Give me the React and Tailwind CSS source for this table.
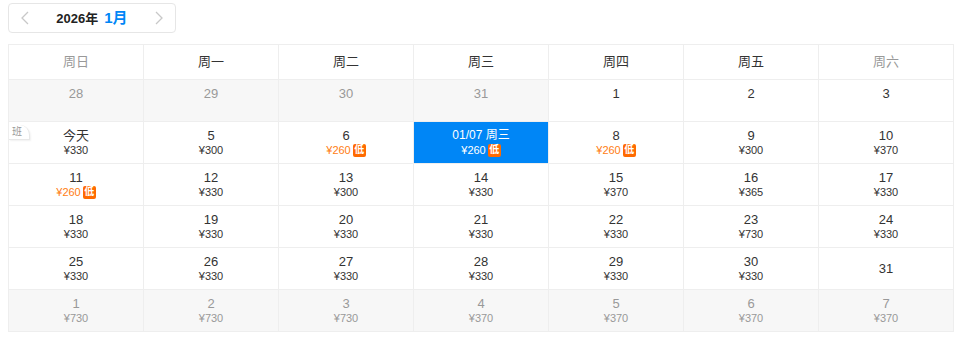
const weekdays = ["周日", "周一", "周二", "周三", "周四", "周五", "周六"];

// kind: prev / next = other month, low = lowest price, sel = selected
const rows = [
  [
    { d: "28", kind: "prev" },
    { d: "29", kind: "prev" },
    { d: "30", kind: "prev" },
    { d: "31", kind: "prev" },
    { d: "1", blank: true },
    { d: "2", blank: true },
    { d: "3", blank: true },
  ],
  [
    { d: "今天", p: "330", ban: true },
    { d: "5", p: "300" },
    { d: "6", p: "260", kind: "low" },
    { d: "01/07 周三", p: "260", kind: "sel" },
    { d: "8", p: "260", kind: "low" },
    { d: "9", p: "300" },
    { d: "10", p: "370" },
  ],
  [
    { d: "11", p: "260", kind: "low" },
    { d: "12", p: "330" },
    { d: "13", p: "300" },
    { d: "14", p: "330" },
    { d: "15", p: "370" },
    { d: "16", p: "365" },
    { d: "17", p: "330" },
  ],
  [
    { d: "18", p: "330" },
    { d: "19", p: "330" },
    { d: "20", p: "330" },
    { d: "21", p: "330" },
    { d: "22", p: "330" },
    { d: "23", p: "730" },
    { d: "24", p: "330" },
  ],
  [
    { d: "25", p: "330" },
    { d: "26", p: "330" },
    { d: "27", p: "330" },
    { d: "28", p: "330" },
    { d: "29", p: "330" },
    { d: "30", p: "330" },
    { d: "31" },
  ],
  [
    { d: "1", p: "730", kind: "next" },
    { d: "2", p: "730", kind: "next" },
    { d: "3", p: "730", kind: "next" },
    { d: "4", p: "370", kind: "next" },
    { d: "5", p: "370", kind: "next" },
    { d: "6", p: "370", kind: "next" },
    { d: "7", p: "370", kind: "next" },
  ],
];

function LowBadge() {
  return (
    <span className="ml-[2px] inline-flex h-[13px] w-[13px] items-center justify-center rounded-[2px] bg-[#ff6a00] text-[10px] font-bold leading-none text-white">
      低
    </span>
  );
}

function Cell({ cell }) {
  const other = cell.kind === "prev" || cell.kind === "next";
  const sel = cell.kind === "sel";
  const low = cell.kind === "low";
  const bg = sel ? "bg-[#0086f6]" : other ? "bg-[#f7f7f7]" : "bg-white";
  const dayColor = sel ? "text-white" : other ? "text-[#999]" : "text-[#333]";
  const priceColor = sel ? "text-white" : low ? "text-[#ff7d13]" : other ? "text-[#999]" : "text-[#333]";
  const centered = !cell.p && !cell.blank && !other;

  return (
    <div
      className={`relative flex h-[42px] flex-col items-center border-b border-r border-[#eeeeee] ${bg} ${
        centered ? "justify-center" : "pt-[6px]"
      }`}
    >
      {cell.ban && (
        <span className="absolute left-0 top-[3px] flex h-[15px] items-center rounded-tr-[10px] border-b border-r border-[#e8e8e8] bg-white pl-[3px] pr-[7px] text-[10px] leading-none text-[#999] shadow-[1px_1px_2px_rgba(0,0,0,0.06)]">
          班
        </span>
      )}
      <span className={`leading-[15px] ${sel ? "text-[12px]" : "text-[13px]"} ${dayColor}`}>{cell.d}</span>
      {cell.p && (
        <span className={`flex h-[14px] items-center text-[11px] leading-[13px] ${priceColor}`}>
          ¥{cell.p}
          {(low || sel) && <LowBadge />}
        </span>
      )}
    </div>
  );
}

function Chevron({ dir }) {
  return (
    <svg width="10" height="14" viewBox="0 0 10 14" fill="none" stroke="#c8c8c8" strokeWidth="1.3">
      {dir === "left" ? <path d="M8 1 2 7l6 6" /> : <path d="M2 1l6 6-6 6" />}
    </svg>
  );
}

export default function App() {
  return (
    <div
      className="h-[338px] w-[960px] bg-white px-2 pt-[3px]"
      style={{ fontFamily: '"Liberation Sans", "Noto Sans CJK SC", sans-serif' }}
    >
      <div className="flex h-[30px] w-[168px] items-center justify-between rounded-[4px] border border-[#e6e6e6] px-[11px]">
        <Chevron dir="left" />
        <div className="flex items-baseline gap-[6px]">
          <span className="text-[13px] font-bold text-[#222]">2026年</span>
          <span className="text-[15px] font-bold text-[#0086f6]">1月</span>
        </div>
        <Chevron dir="right" />
      </div>

      <div className="mt-[11px] grid w-[946px] grid-cols-7 border-l border-t border-[#eeeeee]">
        {weekdays.map((w, i) => (
          <div
            key={w}
            className={`flex h-[35px] items-center justify-center border-b border-r border-[#eeeeee] text-[13px] ${
              i === 0 || i === 6 ? "text-[#999]" : "text-[#333]"
            }`}
          >
            {w}
          </div>
        ))}
        {rows.map((row, r) => row.map((cell, c) => <Cell key={`${r}-${c}`} cell={cell} />))}
      </div>
    </div>
  );
}
